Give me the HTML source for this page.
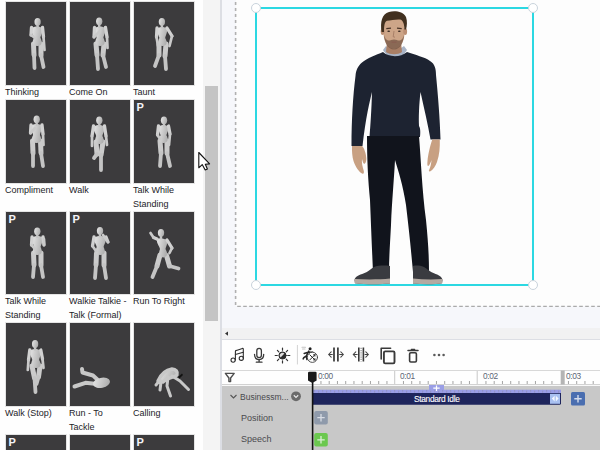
<!DOCTYPE html>
<html><head><meta charset="utf-8">
<style>
*{box-sizing:border-box;margin:0;padding:0}
html,body{width:600px;height:450px;overflow:hidden;background:#fefefe;font-family:"Liberation Sans",sans-serif}
.a{position:absolute}
.th{position:absolute;width:62px;height:85px;background:#3c3b3d;border:1px solid #e4e4e4}
.lb{position:absolute;font-size:9px;line-height:14px;color:#232328;white-space:nowrap}
.p{position:absolute;left:2.5px;top:0.5px;font-size:11px;font-weight:bold;color:#f4f4f8;line-height:12px}
.th svg{position:absolute;left:0;top:0}
.tk{font-size:8.3px;line-height:10px;color:#5d6676;letter-spacing:-0.35px}
.rl{font-size:9px;line-height:12px;color:#4a4a4e}
</style></head><body>
<!-- sidebar -->
<div class="a" style="left:0;top:0;width:203px;height:450px;background:#fefefe">
  <div class="th" style="left:5px;top:1px"></div>
  <div class="th" style="left:69px;top:1px"></div>
  <div class="th" style="left:133px;top:1px"></div>
  <div class="lb" style="left:5px;top:84.6px">Thinking</div>
  <div class="lb" style="left:69px;top:84.6px">Come On</div>
  <div class="lb" style="left:133px;top:84.6px">Taunt</div>

  <div class="th" style="left:5px;top:99px"></div>
  <div class="th" style="left:69px;top:99px"></div>
  <div class="th" style="left:133px;top:99px"><div class="p">P</div></div>
  <div class="lb" style="left:5px;top:182.6px">Compliment</div>
  <div class="lb" style="left:69px;top:182.6px">Walk</div>
  <div class="lb" style="left:133px;top:182.6px">Talk While<br>Standing</div>

  <div class="th" style="left:5px;top:211px;height:84px"><div class="p">P</div></div>
  <div class="th" style="left:69px;top:211px;height:84px"><div class="p">P</div></div>
  <div class="th" style="left:133px;top:211px;height:84px"></div>
  <div class="lb" style="left:5px;top:293.6px">Talk While<br>Standing</div>
  <div class="lb" style="left:69px;top:293.6px">Walkie Talkie -<br>Talk (Formal)</div>
  <div class="lb" style="left:133px;top:293.6px">Run To Right</div>

  <div class="th" style="left:5px;top:322px"></div>
  <div class="th" style="left:69px;top:322px"></div>
  <div class="th" style="left:133px;top:322px"></div>
  <div class="lb" style="left:5px;top:405.6px">Walk (Stop)</div>
  <div class="lb" style="left:69px;top:405.6px">Run - To<br>Tackle</div>
  <div class="lb" style="left:133px;top:405.6px">Calling</div>

  <div class="th" style="left:5px;top:434px"><div class="p">P</div></div>
  <div class="th" style="left:69px;top:434px"></div>
  <div class="th" style="left:133px;top:434px"><div class="p">P</div></div>
</div>
<svg class="a" style="left:0;top:0" width="203" height="450">
<defs><linearGradient id="mg" x1="0" y1="0" x2="1" y2="0.3"><stop offset="0" stop-color="#e8e8e8"/><stop offset="1" stop-color="#b0b0b0"/></linearGradient></defs>
<g><path d="M33.5,44.0 L34.0,55.0" stroke="#cbcbcb" stroke-width="5.0" stroke-linecap="round"/><path d="M34.0,55.0 L34.5,68.0" stroke="#c4c4c4" stroke-width="3.8" stroke-linecap="round"/><path d="M41.0,44.0 L41.0,55.0" stroke="#cbcbcb" stroke-width="5.0" stroke-linecap="round"/><path d="M41.0,55.0 L43.5,67.0" stroke="#c4c4c4" stroke-width="3.8" stroke-linecap="round"/><path d="M31.5,27.5 C37.0,26.0 37.0,26.0 42.5,27.5 C43.5,31.5 40.9,34.7 40.4,37.7 C42.5,42.0 42.5,45.5 37.2,46.0 C32.0,45.5 32.0,42.0 33.9,37.7 C33.4,34.7 30.5,31.5 31.5,27.5 Z" fill="url(#mg)"/><path d="M31.5,27.5 L31.0,35.0" stroke="#d2d2d2" stroke-width="3.3" stroke-linecap="round"/><path d="M31.0,35.0 L35.0,38.0" stroke="#cacaca" stroke-width="2.7" stroke-linecap="round"/><path d="M42.5,27.5 L43.5,37.0" stroke="#d2d2d2" stroke-width="3.3" stroke-linecap="round"/><path d="M43.5,37.0 L44.5,50.0" stroke="#cacaca" stroke-width="2.7" stroke-linecap="round"/><path d="M37.6,24.8 L37.6,27.3" stroke="#c4c4c4" stroke-width="2.4" stroke-linecap="round"/><ellipse cx="37.6" cy="21.8" rx="3.15" ry="3.90" fill="url(#mg)"/></g>
<g><path d="M96.0,44.0 L97.0,55.0" stroke="#cbcbcb" stroke-width="5.0" stroke-linecap="round"/><path d="M97.0,55.0 L98.0,69.0" stroke="#c4c4c4" stroke-width="3.8" stroke-linecap="round"/><path d="M104.0,44.0 L103.0,55.0" stroke="#cbcbcb" stroke-width="5.0" stroke-linecap="round"/><path d="M103.0,55.0 L106.0,67.0" stroke="#c4c4c4" stroke-width="3.8" stroke-linecap="round"/><path d="M94.5,27.5 C100.0,26.0 100.0,26.0 105.5,27.5 C106.5,31.5 103.9,34.7 103.4,37.7 C105.5,42.0 105.5,45.5 100.0,46.0 C94.5,45.5 94.5,42.0 96.6,37.7 C96.1,34.7 93.5,31.5 94.5,27.5 Z" fill="url(#mg)"/><path d="M94.5,27.5 L94.0,37.0" stroke="#d2d2d2" stroke-width="3.3" stroke-linecap="round"/><path d="M94.0,37.0 L100.0,31.0" stroke="#cacaca" stroke-width="2.7" stroke-linecap="round"/><path d="M105.5,27.5 L107.0,37.0" stroke="#d2d2d2" stroke-width="3.3" stroke-linecap="round"/><path d="M107.0,37.0 L107.5,48.0" stroke="#cacaca" stroke-width="2.7" stroke-linecap="round"/><path d="M99.2,24.3 L99.2,26.8" stroke="#c4c4c4" stroke-width="2.4" stroke-linecap="round"/><ellipse cx="99.2" cy="21.3" rx="3.15" ry="3.90" fill="url(#mg)"/></g>
<g><path d="M159.0,44.0 L159.0,55.0" stroke="#cbcbcb" stroke-width="5.0" stroke-linecap="round"/><path d="M159.0,55.0 L155.0,66.0" stroke="#c4c4c4" stroke-width="3.8" stroke-linecap="round"/><path d="M166.0,44.0 L165.0,56.0" stroke="#cbcbcb" stroke-width="5.0" stroke-linecap="round"/><path d="M165.0,56.0 L166.0,69.0" stroke="#c4c4c4" stroke-width="3.8" stroke-linecap="round"/><path d="M157.0,28.0 C162.0,26.5 162.0,26.5 167.0,28.0 C168.0,32.0 165.7,34.9 165.2,37.9 C167.5,42.0 167.5,45.5 162.5,46.0 C157.5,45.5 157.5,42.0 159.4,37.9 C158.9,34.9 156.0,32.0 157.0,28.0 Z" fill="url(#mg)"/><path d="M157.0,28.0 L156.5,37.0" stroke="#d2d2d2" stroke-width="3.3" stroke-linecap="round"/><path d="M156.5,37.0 L158.0,46.0" stroke="#cacaca" stroke-width="2.7" stroke-linecap="round"/><path d="M167.0,28.0 L172.0,36.0" stroke="#d2d2d2" stroke-width="3.3" stroke-linecap="round"/><path d="M172.0,36.0 L169.5,46.0" stroke="#cacaca" stroke-width="2.7" stroke-linecap="round"/><path d="M161.9,24.8 L161.9,27.3" stroke="#c4c4c4" stroke-width="2.4" stroke-linecap="round"/><ellipse cx="161.9" cy="21.8" rx="3.15" ry="3.90" fill="url(#mg)"/></g>
<g><path d="M32.5,141.0 L33.0,153.0" stroke="#cbcbcb" stroke-width="5.0" stroke-linecap="round"/><path d="M33.0,153.0 L33.0,166.0" stroke="#c4c4c4" stroke-width="3.8" stroke-linecap="round"/><path d="M40.5,141.0 L41.0,153.0" stroke="#cbcbcb" stroke-width="5.0" stroke-linecap="round"/><path d="M41.0,153.0 L43.0,166.0" stroke="#c4c4c4" stroke-width="3.8" stroke-linecap="round"/><path d="M31.0,125.0 C36.5,123.5 36.5,123.5 42.0,125.0 C43.0,129.0 40.4,131.9 39.9,134.9 C42.0,139.0 42.0,142.5 36.5,143.0 C31.0,142.5 31.0,139.0 33.1,134.9 C32.6,131.9 30.0,129.0 31.0,125.0 Z" fill="url(#mg)"/><path d="M31.0,125.0 L30.5,133.0" stroke="#d2d2d2" stroke-width="3.3" stroke-linecap="round"/><path d="M30.5,133.0 L35.0,128.0" stroke="#cacaca" stroke-width="2.7" stroke-linecap="round"/><path d="M42.0,125.0 L43.0,134.0" stroke="#d2d2d2" stroke-width="3.3" stroke-linecap="round"/><path d="M43.0,134.0 L43.5,145.0" stroke="#cacaca" stroke-width="2.7" stroke-linecap="round"/><path d="M36.7,122.3 L36.7,124.8" stroke="#c4c4c4" stroke-width="2.4" stroke-linecap="round"/><ellipse cx="36.7" cy="119.3" rx="3.15" ry="3.90" fill="url(#mg)"/></g>
<g><path d="M96.0,142.0 L97.0,154.0" stroke="#cbcbcb" stroke-width="5.0" stroke-linecap="round"/><path d="M97.0,154.0 L94.0,158.0" stroke="#c4c4c4" stroke-width="3.8" stroke-linecap="round"/><path d="M103.0,142.0 L101.0,155.0" stroke="#cbcbcb" stroke-width="5.0" stroke-linecap="round"/><path d="M101.0,155.0 L101.0,170.0" stroke="#c4c4c4" stroke-width="3.8" stroke-linecap="round"/><path d="M93.5,126.0 C99.0,124.5 99.0,124.5 104.5,126.0 C105.5,130.0 102.9,132.9 102.4,135.9 C104.5,140.0 104.5,143.5 99.5,144.0 C94.5,143.5 94.5,140.0 96.2,135.9 C95.7,132.9 92.5,130.0 93.5,126.0 Z" fill="url(#mg)"/><path d="M93.5,126.0 L92.0,136.0" stroke="#d2d2d2" stroke-width="3.3" stroke-linecap="round"/><path d="M92.0,136.0 L92.0,146.0" stroke="#cacaca" stroke-width="2.7" stroke-linecap="round"/><path d="M104.5,126.0 L106.0,136.0" stroke="#d2d2d2" stroke-width="3.3" stroke-linecap="round"/><path d="M106.0,136.0 L107.0,145.0" stroke="#cacaca" stroke-width="2.7" stroke-linecap="round"/><path d="M99.3,123.3 L99.3,125.8" stroke="#c4c4c4" stroke-width="2.4" stroke-linecap="round"/><ellipse cx="99.3" cy="120.3" rx="3.15" ry="3.90" fill="url(#mg)"/></g>
<g><path d="M160.0,141.0 L161.0,153.0" stroke="#cbcbcb" stroke-width="5.0" stroke-linecap="round"/><path d="M161.0,153.0 L160.0,166.0" stroke="#c4c4c4" stroke-width="3.8" stroke-linecap="round"/><path d="M167.0,141.0 L167.0,153.0" stroke="#cbcbcb" stroke-width="5.0" stroke-linecap="round"/><path d="M167.0,153.0 L170.0,166.0" stroke="#c4c4c4" stroke-width="3.8" stroke-linecap="round"/><path d="M158.5,126.0 C163.5,124.5 163.5,124.5 168.5,126.0 C169.5,130.0 166.9,132.3 166.4,135.3 C168.5,139.0 168.5,142.5 163.5,143.0 C158.5,142.5 158.5,139.0 160.6,135.3 C160.1,132.3 157.5,130.0 158.5,126.0 Z" fill="url(#mg)"/><path d="M158.5,126.0 L157.5,135.0" stroke="#d2d2d2" stroke-width="3.3" stroke-linecap="round"/><path d="M157.5,135.0 L160.0,139.0" stroke="#cacaca" stroke-width="2.7" stroke-linecap="round"/><path d="M168.5,126.0 L170.0,134.0" stroke="#d2d2d2" stroke-width="3.3" stroke-linecap="round"/><path d="M170.0,134.0 L169.0,145.0" stroke="#cacaca" stroke-width="2.7" stroke-linecap="round"/><path d="M164.0,123.3 L164.0,125.8" stroke="#c4c4c4" stroke-width="2.4" stroke-linecap="round"/><ellipse cx="164" cy="120.3" rx="3.15" ry="3.90" fill="url(#mg)"/></g>
<g><path d="M33.5,253.0 L34.0,265.0" stroke="#cbcbcb" stroke-width="5.0" stroke-linecap="round"/><path d="M34.0,265.0 L33.0,277.0" stroke="#c4c4c4" stroke-width="3.8" stroke-linecap="round"/><path d="M41.0,253.0 L41.0,265.0" stroke="#cbcbcb" stroke-width="5.0" stroke-linecap="round"/><path d="M41.0,265.0 L43.0,277.0" stroke="#c4c4c4" stroke-width="3.8" stroke-linecap="round"/><path d="M32.0,237.0 C37.5,235.5 37.5,235.5 43.0,237.0 C44.0,241.0 41.1,243.9 40.6,246.9 C42.5,251.0 42.5,254.5 37.2,255.0 C32.0,254.5 32.0,251.0 34.1,246.9 C33.6,243.9 31.0,241.0 32.0,237.0 Z" fill="url(#mg)"/><path d="M32.0,237.0 L31.5,245.0" stroke="#d2d2d2" stroke-width="3.3" stroke-linecap="round"/><path d="M31.5,245.0 L35.0,249.0" stroke="#cacaca" stroke-width="2.7" stroke-linecap="round"/><path d="M43.0,237.0 L44.0,245.0" stroke="#d2d2d2" stroke-width="3.3" stroke-linecap="round"/><path d="M44.0,245.0 L44.0,239.0" stroke="#cacaca" stroke-width="2.7" stroke-linecap="round"/><path d="M37.3,234.3 L37.3,236.8" stroke="#c4c4c4" stroke-width="2.4" stroke-linecap="round"/><ellipse cx="37.3" cy="231.3" rx="3.15" ry="3.90" fill="url(#mg)"/></g>
<g><path d="M96.5,253.0 L96.0,265.0" stroke="#cbcbcb" stroke-width="5.0" stroke-linecap="round"/><path d="M96.0,265.0 L95.0,278.0" stroke="#c4c4c4" stroke-width="3.8" stroke-linecap="round"/><path d="M104.0,253.0 L104.0,265.0" stroke="#cbcbcb" stroke-width="5.0" stroke-linecap="round"/><path d="M104.0,265.0 L106.0,278.0" stroke="#c4c4c4" stroke-width="3.8" stroke-linecap="round"/><path d="M94.0,237.0 C100.0,235.5 100.0,235.5 106.0,237.0 C107.0,241.0 104.1,243.9 103.6,246.9 C105.5,251.0 105.5,254.5 100.2,255.0 C95.0,254.5 95.0,251.0 96.7,246.9 C96.2,243.9 93.0,241.0 94.0,237.0 Z" fill="url(#mg)"/><path d="M94.0,237.0 L92.5,246.0" stroke="#d2d2d2" stroke-width="3.3" stroke-linecap="round"/><path d="M92.5,246.0 L96.0,251.0" stroke="#cacaca" stroke-width="2.7" stroke-linecap="round"/><path d="M106.0,237.0 L108.0,242.0" stroke="#d2d2d2" stroke-width="3.3" stroke-linecap="round"/><path d="M108.0,242.0 L103.0,235.0" stroke="#cacaca" stroke-width="2.7" stroke-linecap="round"/><path d="M100.0,233.8 L100.0,236.3" stroke="#c4c4c4" stroke-width="2.4" stroke-linecap="round"/><ellipse cx="100" cy="230.8" rx="3.15" ry="3.90" fill="url(#mg)"/></g>
<g><path d="M160.0,255.0 L157.0,266.0" stroke="#cbcbcb" stroke-width="5.0" stroke-linecap="round"/><path d="M157.0,266.0 L152.5,277.0" stroke="#c4c4c4" stroke-width="3.8" stroke-linecap="round"/><path d="M166.5,255.5 L169.5,266.0" stroke="#cbcbcb" stroke-width="5.0" stroke-linecap="round"/><path d="M169.5,266.0 L178.5,268.5" stroke="#c4c4c4" stroke-width="3.8" stroke-linecap="round"/><path d="M157.0,239.0 C162.0,237.5 162.0,238.5 167.0,240.0 C168.0,244.0 166.0,245.9 165.5,248.9 C168.0,253.5 168.0,257.0 163.2,257.5 C158.5,256.5 158.5,253.0 160.0,248.9 C159.5,245.9 156.0,243.0 157.0,239.0 Z" fill="url(#mg)"/><path d="M157.0,239.0 L153.5,237.5" stroke="#d2d2d2" stroke-width="3.3" stroke-linecap="round"/><path d="M153.5,237.5 L150.5,233.0" stroke="#cacaca" stroke-width="2.7" stroke-linecap="round"/><path d="M167.0,240.0 L172.0,248.0" stroke="#d2d2d2" stroke-width="3.3" stroke-linecap="round"/><path d="M172.0,248.0 L169.5,253.0" stroke="#cacaca" stroke-width="2.7" stroke-linecap="round"/><path d="M161.0,235.8 L161.0,238.3" stroke="#c4c4c4" stroke-width="2.4" stroke-linecap="round"/><ellipse cx="161" cy="232.8" rx="3.15" ry="3.90" fill="url(#mg)"/></g>
<g><path d="M32.0,366.0 L34.5,378.0" stroke="#cbcbcb" stroke-width="5.0" stroke-linecap="round"/><path d="M34.5,378.0 L35.5,392.0" stroke="#c4c4c4" stroke-width="3.8" stroke-linecap="round"/><path d="M40.0,366.0 L38.5,377.0" stroke="#cbcbcb" stroke-width="5.0" stroke-linecap="round"/><path d="M38.5,377.0 L36.5,384.0" stroke="#c4c4c4" stroke-width="3.8" stroke-linecap="round"/><path d="M29.8,350.0 C35.3,348.5 35.3,348.5 40.8,350.0 C41.8,354.0 39.6,356.9 39.1,359.9 C41.5,364.0 41.5,367.5 36.0,368.0 C30.5,367.5 30.5,364.0 32.3,359.9 C31.8,356.9 28.8,354.0 29.8,350.0 Z" fill="url(#mg)"/><path d="M29.8,350.0 L28.5,360.0" stroke="#d2d2d2" stroke-width="3.3" stroke-linecap="round"/><path d="M28.5,360.0 L27.8,370.0" stroke="#cacaca" stroke-width="2.7" stroke-linecap="round"/><path d="M40.8,350.0 L42.5,359.0" stroke="#d2d2d2" stroke-width="3.3" stroke-linecap="round"/><path d="M42.5,359.0 L43.5,368.0" stroke="#cacaca" stroke-width="2.7" stroke-linecap="round"/><path d="M35.1,347.0 L35.1,349.5" stroke="#c4c4c4" stroke-width="2.4" stroke-linecap="round"/><ellipse cx="35.1" cy="344" rx="3.15" ry="3.90" fill="url(#mg)"/></g>
<g fill="none" stroke="#c8c8c8" stroke-linecap="round" stroke-linejoin="round">
<path d="M82,369 L82.5,372.5 L93,375.5 L99.5,381.5 M74.5,386.5 L85.5,382.8 L97,384" stroke-width="4"/>
<ellipse cx="101.5" cy="382.8" rx="8.6" ry="5" transform="rotate(-12 101.5 382.8)" fill="url(#mg)" stroke="none"/>
<path d="M158,381 C161,374 166,370 172,369 C176,369 178,372 177,375 C174,378 168,377 163,382 Z" fill="url(#mg)" stroke-width="3.4"/>
<path d="M168,377 L167,386 L170.5,396 M172,376 L180,381 L188.5,389.5 M160,380 L156,385 M161,382 L160,390" stroke-width="3"/>
</g>
<path d="M178,377 L182,373.5 L183,375 L179.5,378.5 Z" fill="#111"/>
</svg>
<!-- vertical scrollbar -->
<div class="a" style="left:203px;top:0;width:17px;height:450px;background:#f4f4f4"></div>
<div class="a" style="left:205px;top:86px;width:13px;height:235px;background:#c4c4c4"></div>
<div class="a" style="left:220px;top:0;width:2px;height:450px;background:#dcdee4"></div>

<!-- canvas -->
<div class="a" style="left:222px;top:0;width:378px;height:328px;background:#f6f7fb"></div>
<div class="a" style="left:236px;top:0;width:364px;height:306px;background:#fdfdfd"></div>
<svg class="a" style="left:0;top:0" width="600" height="320"><path d="M235.6,0 L235.6,306" stroke="#b0b0b0" stroke-width="1.6" stroke-dasharray="3 3" stroke-dashoffset="4"/><path d="M237.2,306.4 L600,306.4" stroke="#aaaaaa" stroke-width="1.3" stroke-dasharray="3.6 2.4"/></svg>


<!-- selection -->
<div class="a" style="left:255px;top:7px;width:279px;height:279px;border:2px solid #2cd8e2"></div>
<svg class="a" style="left:0;top:0" width="600" height="450">
<g id="man">
 <path d="M383,50 C386,55 390,57.5 395,57.5 C400,57.5 404,55 407,50 L404,46 C400,49 397,50 395,50 C392,50 388,49 386,46 Z" fill="#a7b3c6"/>
 <path d="M383,52 C388,57 400,58 407,52 C415,55 425,57 430,61 C435,64 436,69 436,75 C438,95 440,120 440.5,139.5 L430.5,139.5 C428,125 424,108 420.5,92 C419,105 418.5,118 419,126 C420.5,128 420.5,133 420,137 L369.5,137 C370.5,125 371.5,110 372,92 C370,100 365.5,118 362.5,146 L351.5,146 C351.5,120 353,95 355.5,76 C356,70 358,66 362,62.5 C367,58 376,55 383,52 Z" fill="#1d2331"/>
 <path d="M367,136 L419,136 C421,160 422,190 426,220 C428,240 429,255 429,272 L413,272 C411,250 409,230 406,205 C403,185 398,170 395,160 C394,180 392,200 391,225 C390,245 389,258 389,272 L373,272 C372,250 371,225 370,200 C368,180 367,160 367,136 Z" fill="#11141c"/>
 <path d="M387,42 L401,42 L402,52 C398,55 390,55 386,52 Z" fill="#a97f66"/>
 <path d="M383.5,24 C383.5,18 388,15.5 394,15.5 C400,15.5 404.5,18 404.5,24 L404.5,33 C404.5,40 401,48.5 394,49.2 C387,48.5 383.5,40 383.5,33 Z" fill="#cda588"/>
 <ellipse cx="382.6" cy="31.5" rx="1.9" ry="3.6" fill="#bb8f74"/>
 <ellipse cx="405.2" cy="31.5" rx="1.9" ry="3.6" fill="#bb8f74"/>
 <path d="M381.6,32 C380,22 382,14 389,12 C395,10.5 403,11.5 406,17 C407.5,21 407,26 406,29.5 L404.4,29.5 C404.4,24 403,20 400,19.5 C396,19 391,20.5 387,20.8 C384.6,21.5 384,26 384,32 Z" fill="#41301f"/>
 <path d="M386.3,28.6 L391,28.1 M397,28.1 L401.7,28.6" stroke="#4a3428" stroke-width="1.1" fill="none"/>
 <ellipse cx="388.7" cy="31.3" rx="1.4" ry="0.8" fill="#3a2a22"/>
 <ellipse cx="399.3" cy="31.3" rx="1.4" ry="0.8" fill="#3a2a22"/>
 <path d="M394,31 L393.2,36.8 L395,37.2" stroke="#a07660" stroke-width="0.8" fill="none"/>
 <path d="M384,35 C384.5,43 388,49.2 394,49.6 C400,49.2 403.5,43 404,35 C403,38 402,40 400,40.5 C398,41 396.5,39.5 394,39.5 C391.5,39.5 390,41 388,40.5 C386,40 385,38 384,35 Z" fill="#6a4c3c" opacity="0.68"/>
 <path d="M391.5,42.2 L396.5,42.2" stroke="#8a5a50" stroke-width="0.9"/>
 <path d="M352,146 L362.2,146 C364,148 366,153 366.3,158 C366.5,161 365.5,164 364.2,163.8 C363,163.5 362.6,161 362,159 C361.5,162 362.5,167 363.8,171 C364.2,173 363.5,174 362.5,173.8 C359,172 355.5,167 353.5,161 C352.3,157 351.8,151 352,146 Z" fill="#c8a082"/>
 <path d="M432.3,139.5 L439.8,139.5 C440,147 439.5,155 437,162 C435.5,166 433,170 430,171.5 C428.8,171.8 428.5,170.5 429.3,169.5 C430.5,167 431.2,164 431.5,160 C430.8,162 429.5,165.5 428.2,166 C427.3,166 427.2,164 427.5,161 C428,155 430,146 432.3,139.5 Z" fill="#c8a082"/>
 <path d="M390,268 L390,283.5 C380,284.6 365,284.6 355,283.2 L354.5,280 C355,276.5 359,275 364,273.3 C368,271.8 371,268.5 374,267 C378,265.5 385,265.3 390,266 Z" fill="#3a3b40"/>
 <path d="M354.6,279 L354.8,283.2 C365,284.6 380,284.6 390,283.5 L390,278.6 C380,279.6 366,279.8 354.6,279 Z" fill="#b3aaa2"/>
 <path d="M413,268 L413,283.5 C423,284.6 435,284.6 442,283.2 L442.5,280 C442,276.5 438.5,275 434,273.3 C430,271.8 427,268.5 424,267 C420,265.5 416,265.3 413,266 Z" fill="#3a3b40"/>
 <path d="M442.4,279 L442.2,283.2 C435,284.6 423,284.6 413,283.5 L413,278.6 C423,279.6 434,279.8 442.4,279 Z" fill="#b3aaa2"/>
</g>
 <circle cx="256" cy="8" r="4.5" fill="#fff" stroke="#c9d3dc" stroke-width="1"/>
 <circle cx="533" cy="8" r="4.5" fill="#fff" stroke="#c9d3dc" stroke-width="1"/>
 <circle cx="256" cy="285" r="4.5" fill="#fff" stroke="#c9d3dc" stroke-width="1"/>
 <circle cx="533" cy="285" r="4.5" fill="#fff" stroke="#c9d3dc" stroke-width="1"/>
</svg>

<!-- h scrollbar -->
<div class="a" style="left:222px;top:328px;width:378px;height:11px;background:#f1f1f2"></div>
<div class="a" style="left:222px;top:339px;width:378px;height:1px;background:#dcdee4"></div>

<!-- toolbar -->
<div class="a" style="left:222px;top:340px;width:378px;height:30px;background:#fefefe"></div>
<div class="a" style="left:222px;top:370px;width:378px;height:1px;background:#d8d8d8"></div>
<!-- ruler -->
<div class="a" style="left:222px;top:371px;width:378px;height:13px;background:#fefefe"></div>
<div class="a" style="left:222px;top:384px;width:378px;height:1px;background:#d2d2d2"></div>
<div class="a" style="left:222px;top:385px;width:378px;height:1px;background:#f8f8f8"></div>
<!-- timeline -->
<div class="a" style="left:222px;top:386px;width:378px;height:64px;background:#c8c8c8"></div>


<!-- toolbar icons -->
<svg class="a" style="left:0;top:0" width="600" height="450" fill="none" stroke="#3a3a3a" stroke-width="1.3" stroke-linecap="round" stroke-linejoin="round">
 <!-- music -->
 <g stroke-width="1.1" stroke="#2e2e2e">
 <circle cx="233.1" cy="360.1" r="2.1"/>
 <circle cx="241.3" cy="358.3" r="2.1"/>
 <path d="M235.4,360 L235.4,351.6 Q235.4,350.6 236.4,350.4 L242.4,348.4 Q243.3,348.2 243.3,349.2 L243.3,358.2"/>
 <path d="M235.4,354.5 L243.3,352.2"/>
 </g>
 <!-- mic -->
 <rect x="256.8" y="348.4" width="4.6" height="9.2" rx="2.3"/>
 <path d="M254.5,354.3 C254.5,358 256.5,359.6 259.1,359.6 C261.7,359.6 263.7,358 263.7,354.3"/>
 <path d="M259.1,359.6 L259.1,362 M256.3,362.2 L262,362.2"/>
 <!-- sun -->
 <g stroke="#333" stroke-width="1.2">
 <path d="M282.5,348.1 L282.5,350.2 M282.5,360.8 L282.5,362.9 M275.2,355.5 L277.3,355.5 M287.7,355.5 L289.8,355.5 M277.4,350.4 L278.8,351.8 M286.2,359.2 L287.6,360.6 M277.4,360.6 L278.8,359.2 M286.2,351.8 L287.6,350.4"/>
 </g>
 <circle cx="282.5" cy="355.5" r="3.6" fill="#2a2a2a" stroke="#2a2a2a" stroke-width="1"/>
 <path d="M280.6,357.4 A2.6,2.6 0 0 1 284.4,353.6 Z" fill="#dedede" stroke="none"/>
 <!-- separator -->
 <path d="M297.4,345.5 L297.4,364" stroke="#cdcdcd" stroke-width="1" stroke-dasharray="1 1"/>
 <!-- run shuffle -->
 <path d="M302,347.3 L305.5,347.3 M302.5,349 L305,349" stroke="#c4c4c4" stroke-width="1.1"/>
 <circle cx="310.1" cy="348.8" r="1.5" fill="#1e1e1e" stroke="none"/>
 <path d="M308.8,351.2 L306.3,356 L303.8,357.6 L303.2,358.8 M306.3,356 L307,359.5 M308.6,352 L312.6,352.3 M308,352.3 L304.2,353.4" stroke="#262626" stroke-width="1.6"/>
 <circle cx="312.4" cy="357.3" r="5.1" fill="#fefefe" stroke="#3c3c3c" stroke-width="0.9"/>
 <path d="M309.8,354.8 L314.9,359.9 M309.8,359.9 L314.9,354.8" stroke="#2a2a2a" stroke-width="1"/>
 <path d="M314.9,354.8 L313.5,354.8 M314.9,354.8 L314.9,356.2 M314.9,359.9 L313.5,359.9 M314.9,359.9 L314.9,358.5" stroke="#2a2a2a" stroke-width="0.9"/>
 <!-- split 1 -->
 <path d="M334,347.6 L334,361.6 M337.9,347.6 L337.9,361.6" stroke-width="1.7" stroke="#383838" stroke-linecap="butt"/>
 <path d="M328.6,354.5 L332.3,354.5 M339.6,354.5 L343.4,354.5 M331.2,351.8 L328.6,354.5 L331.2,357.2 M340.8,351.8 L343.4,354.5 L340.8,357.2" stroke-width="1.05" stroke="#444"/>
 <!-- split 2 -->
 <path d="M358.8,347.6 L358.8,361.6 M363.4,347.6 L363.4,361.6" stroke-width="1.6" stroke="#383838" stroke-linecap="butt"/>
 <path d="M361.1,347.8 L361.1,361.6" stroke-width="1.4" stroke-dasharray="1.2 1" stroke="#9c9c9c" stroke-linecap="butt"/>
 <path d="M353.2,354.5 L357.2,354.5 M365,354.5 L368.4,354.5 M355.8,351.8 L353.2,354.5 L355.8,357.2 M365.8,351.8 L368.4,354.5 L365.8,357.2" stroke-width="1.05" stroke="#444"/>
 <!-- copy -->
 <path d="M381.2,359 L381.2,348.3 L390.6,348.3" stroke-width="1.6"/>
 <rect x="383.9" y="351.4" width="10.6" height="12" rx="1.3" stroke-width="1.9"/>
 <!-- trash -->
 <path d="M408,350.6 L418,350.6" stroke-width="1.5"/>
 <path d="M411.3,349.4 L414.7,349.4" stroke-width="1.2"/>
 <rect x="409.6" y="352.7" width="6.8" height="9.3" rx="1.2" stroke-width="1.6"/>
 <!-- more -->
 <circle cx="434.4" cy="355" r="1.3" fill="#5a5a5a" stroke="none"/>
 <circle cx="439" cy="355" r="1.3" fill="#5a5a5a" stroke="none"/>
 <circle cx="443.6" cy="355" r="1.3" fill="#5a5a5a" stroke="none"/>
 <!-- h scroll arrow -->
 <path d="M225,333.6 L228,331.5 L228,335.8 Z" fill="#333" stroke="none"/>
 <!-- filter -->
 <path d="M225.4,373.4 L234.2,373.4 L230.6,378 L230.6,381.6 L228.9,381.6 L228.9,378 Z" stroke="#4e4e4e" stroke-width="1.4"/>
</svg>
<!-- ruler -->
<svg class="a" style="left:0;top:0" width="600" height="450">
<rect x="320.45" y="381" width="1" height="3" fill="#a4a4a4"/>
<rect x="328.70" y="381" width="1" height="3" fill="#a4a4a4"/>
<rect x="336.95" y="381" width="1" height="3" fill="#a4a4a4"/>
<rect x="345.20" y="381" width="1" height="3" fill="#a4a4a4"/>
<rect x="353.45" y="381" width="1" height="3" fill="#a4a4a4"/>
<rect x="361.70" y="381" width="1" height="3" fill="#a4a4a4"/>
<rect x="369.95" y="381" width="1" height="3" fill="#a4a4a4"/>
<rect x="378.20" y="381" width="1" height="3" fill="#a4a4a4"/>
<rect x="386.45" y="381" width="1" height="3" fill="#a4a4a4"/>
<rect x="394.20" y="371" width="1" height="13" fill="#c8c8c8"/>
<rect x="402.95" y="381" width="1" height="3" fill="#a4a4a4"/>
<rect x="411.20" y="381" width="1" height="3" fill="#a4a4a4"/>
<rect x="419.45" y="381" width="1" height="3" fill="#a4a4a4"/>
<rect x="427.70" y="381" width="1" height="3" fill="#a4a4a4"/>
<rect x="435.95" y="381" width="1" height="3" fill="#a4a4a4"/>
<rect x="444.20" y="381" width="1" height="3" fill="#a4a4a4"/>
<rect x="452.45" y="381" width="1" height="3" fill="#a4a4a4"/>
<rect x="460.70" y="381" width="1" height="3" fill="#a4a4a4"/>
<rect x="468.95" y="381" width="1" height="3" fill="#a4a4a4"/>
<rect x="476.70" y="371" width="1" height="13" fill="#c8c8c8"/>
<rect x="485.45" y="381" width="1" height="3" fill="#a4a4a4"/>
<rect x="493.70" y="381" width="1" height="3" fill="#a4a4a4"/>
<rect x="501.95" y="381" width="1" height="3" fill="#a4a4a4"/>
<rect x="510.20" y="381" width="1" height="3" fill="#a4a4a4"/>
<rect x="518.45" y="381" width="1" height="3" fill="#a4a4a4"/>
<rect x="526.70" y="381" width="1" height="3" fill="#a4a4a4"/>
<rect x="534.95" y="381" width="1" height="3" fill="#a4a4a4"/>
<rect x="543.20" y="381" width="1" height="3" fill="#a4a4a4"/>
<rect x="551.45" y="381" width="1" height="3" fill="#a4a4a4"/>
<rect x="560.7" y="370.5" width="4" height="14" fill="#b4b4b4"/>
<rect x="567.95" y="381" width="1" height="3" fill="#a4a4a4"/>
<rect x="576.20" y="381" width="1" height="3" fill="#a4a4a4"/>
<rect x="584.45" y="381" width="1" height="3" fill="#a4a4a4"/>
<rect x="592.70" y="381" width="1" height="3" fill="#a4a4a4"/>
</svg>
<div class="a tk" style="left:318px;top:371px">0:00</div>
<div class="a tk" style="left:400px;top:371px">0:01</div>
<div class="a tk" style="left:483px;top:371px">0:02</div>
<div class="a tk" style="left:566px;top:371px">0:03</div>
<!-- timeline rows -->
<svg class="a" style="left:0;top:0" width="600" height="450">
 <path d="M230.5,395 L233.5,398 L236.5,395" fill="none" stroke="#555" stroke-width="1.1"/>
 <circle cx="296" cy="396.3" r="4.9" fill="#6a6a6a"/>
 <path d="M293.8,395.3 L296,397.4 L298.2,395.3" fill="none" stroke="#e8e8e8" stroke-width="1.2"/>
 <!-- track -->
 <rect x="429" y="385" width="15" height="5" fill="#9a9ee6"/>
 <defs><pattern id="dots" x="313" y="389.7" width="8" height="3" patternUnits="userSpaceOnUse"><rect width="8" height="3" fill="#9a9ee6"/><rect x="1" y="0.5" width="1.2" height="1" fill="#8a8aa8"/><rect x="5" y="1.5" width="1.2" height="1" fill="#8a8aa8"/></pattern></defs>
 <rect x="313" y="389.7" width="248" height="3.3" fill="url(#dots)"/>
 <path d="M433.3,388.2 L439.7,388.2 M436.5,385.4 L436.5,391" stroke="#fff" stroke-width="1.2"/>
 <path d="M313,393 L561,393 L561,403.2 Q561,404.8 559.4,404.8 L313,404.8 Z" fill="#1e255c"/>
 <rect x="550" y="393.8" width="10" height="10" fill="#a8c0f0"/>
 <path d="M554.6,395.8 L551.8,398.6 L554.6,401.4 Z M555.8,395.8 L558.6,398.6 L555.8,401.4 Z" fill="#f4f8ff"/>
 <rect x="571" y="392" width="14" height="13.6" rx="1.5" fill="#4a6eb0"/>
 <path d="M574.3,398.8 L581.7,398.8 M578,395.1 L578,402.5" stroke="#d4dcec" stroke-width="1.4"/>
 <rect x="314.2" y="411" width="13.6" height="13.4" rx="2" fill="#8f9aab"/>
 <path d="M317.3,417.7 L324.7,417.7 M321,414 L321,421.4" stroke="#d8dce4" stroke-width="1.3"/>
 <rect x="314.2" y="433" width="13.6" height="13.6" rx="2" fill="#6bc84f"/>
 <path d="M317.3,439.8 L324.7,439.8 M321,436.1 L321,443.5" stroke="#dcefd6" stroke-width="1.3"/>
 <!-- playhead -->
 <rect x="311.8" y="380" width="1.6" height="70" fill="#111"/>
 <path d="M308,373 Q308,371.8 309.2,371.8 L315.4,371.8 Q316.6,371.8 316.6,373 L316.6,380.5 L312.3,383 L308,380.5 Z" fill="#1a1a1a"/>
</svg>
<div class="a" style="left:414px;top:394px;font-size:8.4px;line-height:11px;color:#fff;letter-spacing:-0.33px;-webkit-text-stroke:0.1px #fff">Standard Idle</div>
<div class="a rl" style="left:240px;top:391px;font-size:8.5px">Businessm...</div>
<div class="a rl" style="left:241px;top:412px">Position</div>
<div class="a rl" style="left:241px;top:433px">Speech</div>

<svg class="a" style="left:0;top:0" width="600" height="450"><path d="M198.8,152.5 L198.8,167.8 L202.2,164.6 L205.2,169.9 L207.4,168.9 L205.3,164.3 L209.6,163.9 Z" fill="#fff" stroke="#111" stroke-width="1.1" stroke-linejoin="round"/></svg>
</body></html>
